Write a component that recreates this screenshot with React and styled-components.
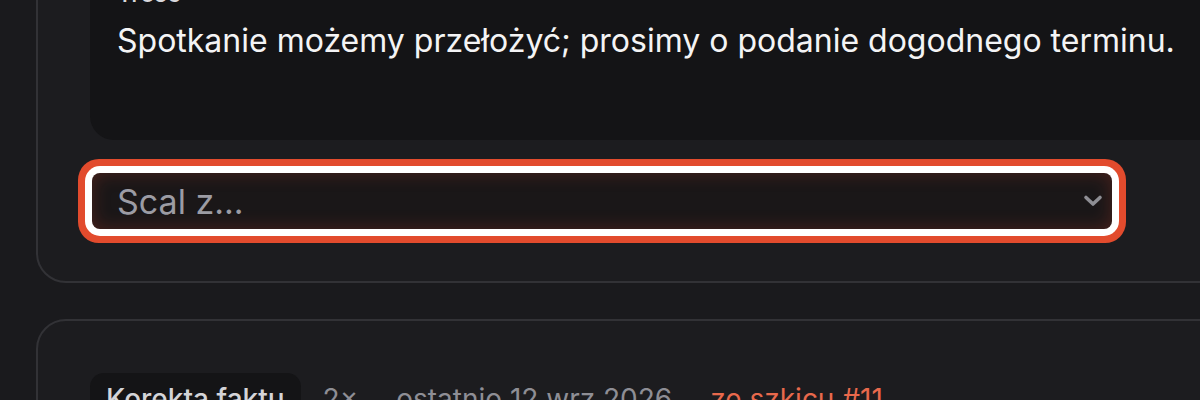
import React from "react";
import styled, { createGlobalStyle } from "styled-components";

const Global = createGlobalStyle`
  html, body { margin: 0; padding: 0; background: #1a1a1d; }
  body { font-family: Inter, "Noto Sans", sans-serif; overflow: hidden; }
  * { box-sizing: border-box; }
`;

const Page = styled.div`
  width: 1200px;
  height: 400px;
  overflow: hidden;
  padding-left: 36px;
  display: flex;
  flex-direction: column;
  gap: 36px;
`;

const Card = styled.section`
  width: 1260px;
  flex-shrink: 0;
  margin-top: ${(p) => (p.$first ? "-93px" : "0")};
  background: #1c1c1f;
  border: 2px solid #323236;
  border-radius: 30px;
  padding: 52px;
  display: flex;
  flex-direction: column;
  gap: 33px;
`;

const Quote = styled.div`
  background: #141416;
  border-radius: 24px;
  padding: 17px 28px 79px 27px;
  display: flex;
  flex-direction: column;
  gap: 11px;
`;

const Label = styled.div`
  font-size: 24px;
  line-height: 32px;
  color: #d8d8dc;
  font-weight: 500;
`;

const Body = styled.p`
  margin: 0;
  font-size: 32px;
  line-height: 40px;
  color: #f4f4f5;
  white-space: nowrap;
`;

const Select = styled.div`
  width: 1020px;
  height: 56px;
  margin-left: 2px;
  border-radius: 8px;
  background: #1a1718;
  box-shadow: inset 0 0 18px rgba(200, 60, 40, 0.28), 0 0 0 7px #ffffff,
    0 0 0 14px #e24b2d;
  display: flex;
  align-items: center;
  justify-content: space-between;
  padding: 0 9px 0 25px;
  font-size: 34px;
  color: #9c9ca4;
`;

const Chevron = styled.svg`
  width: 20px;
  height: 14px;
`;

const Meta = styled.div`
  display: flex;
  align-items: center;
  gap: 22px;
  font-size: 28px;
  line-height: 40px;
  color: #8e8e95;
  white-space: nowrap;
`;

const Badge = styled.span`
  background: #141416;
  border-radius: 14px;
  padding: 6px 16px;
  color: #d4d4d8;
  font-weight: 500;
`;

const Item = styled.span`
  margin-left: ${(p) => (p.$spaced ? "16px" : "0")};
  color: ${(p) => (p.$accent ? "#e8694c" : "inherit")};
`;

export default function App() {
  return (
    <>
      <Global />
      <Page>
        <Card $first>
          <Quote>
            <Label>Treść</Label>
            <Body>Spotkanie możemy przełożyć; prosimy o podanie dogodnego terminu.</Body>
          </Quote>
          <Select>
            <span>Scal z...</span>
            <Chevron viewBox="0 0 20 14" fill="none">
              <path d="M3 3.5 L10 10 L17 3.5" stroke="#8e8e94" strokeWidth="3.6" strokeLinecap="round" strokeLinejoin="round" />
            </Chevron>
          </Select>
        </Card>
        <Card>
          <Meta>
            <Badge>Korekta faktu</Badge>
            <Item>2×</Item>
            <Item $spaced>ostatnio 12 wrz 2026</Item>
            <Item $spaced $accent>ze szkicu #11</Item>
          </Meta>
        </Card>
      </Page>
    </>
  );
}
